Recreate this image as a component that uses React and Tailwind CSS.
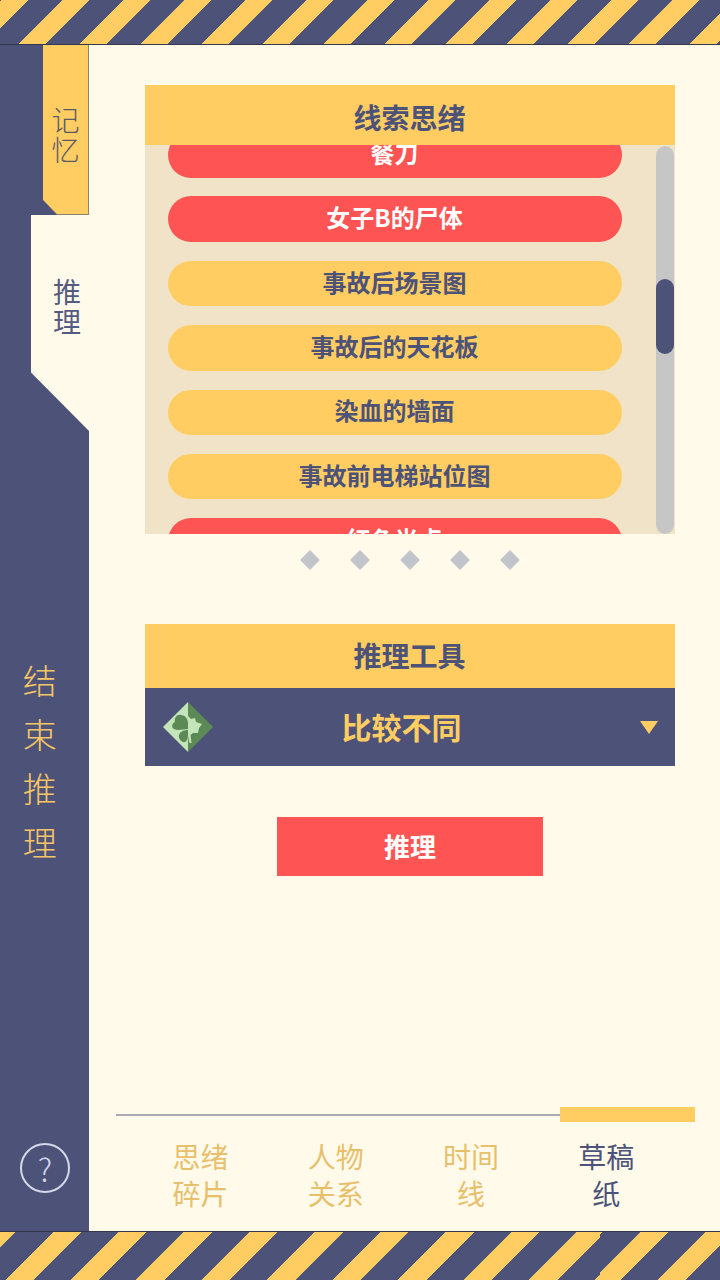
const font = { fontFamily: '"Noto Sans CJK SC", "Noto Sans", sans-serif' };

const pills = [
  ['餐刀', 'red'],
  ['女子B的尸体', 'red'],
  ['事故后场景图', 'yellow'],
  ['事故后的天花板', 'yellow'],
  ['染血的墙面', 'yellow'],
  ['事故前电梯站位图', 'yellow'],
  ['红色光点', 'red'],
];

function Clover() {
  return (
    <svg width="50" height="50" viewBox="0 0 50 50">
      <polygon points="25,0 25,50 0,25" fill="#c4e4ba" />
      <polygon points="25,0 50,25 25,50" fill="#5c8a57" />
      <path d="M25 27 C21 27 15 29 11 27 C8 25 9 21 12 20 C11 16 14 12 18 13 C22 13 25 17 25 21 Z" fill="#5c8a57" />
      <path d="M25 28 C22 28 17 29 16 33 C15 37 19 41 22 40 C24 39 25 36 25 33 Z" fill="#5c8a57" />
      <path d="M25 14 L28 17 L32 16 L33 20 L39 22 L36 26 L35 31 L30 31 L27.5 33 L28.5 41 L26.5 41 L25 34 Z" fill="#c4e4ba" />
    </svg>
  );
}

export default function App() {
  return (
    <div style={font} className="flex h-[1280px] w-[720px] flex-col overflow-hidden bg-[#fffaea]">
      <div className="h-[44px] shrink-0 bg-[repeating-linear-gradient(135deg,#4c5278_0px,#4c5278_1.4px,#ffcd62_1.4px,#ffcd62_20.2px,#4c5278_20.2px,#4c5278_43.13px)]" />
      <div className="h-px shrink-0 bg-[#33364d]" />

      <div className="flex min-h-0 flex-1">
        <aside className="relative z-10 flex w-[88.5px] shrink-0 flex-col bg-[#4c5278]">
          <div className="ml-[43px] h-[170px] w-[46px] shrink-0 bg-[#8a8468] [clip-path:polygon(0_0,100%_0,100%_100%,14px_100%,0_155px)]">
            <div className="flex h-[169px] w-[45px] flex-col items-center bg-[#ffcd62] pt-[59px] [clip-path:polygon(0_0,100%_0,100%_100%,14px_100%,0_155px)]">
              <span className="text-[28px] leading-[30px] font-light text-[#5a5a66]">记</span>
              <span className="text-[28px] leading-[30px] font-light text-[#5a5a66]">忆</span>
            </div>
          </div>
          <div className="ml-[30.5px] flex h-[217px] w-[59.5px] shrink-0 flex-col items-center bg-[#fffaea] pt-[61px] pl-[13.5px] [clip-path:polygon(0_0,100%_0,100%_100%,0_157px)]">
            <span className="text-[28px] leading-[30px] text-[#555b80]">推</span>
            <span className="text-[28px] leading-[30px] text-[#555b80]">理</span>
          </div>
          <div className="mt-[221px] flex flex-col items-center pr-[9px] text-[34px] leading-[54px] font-light text-[#f5c566]">
            <span>结</span>
            <span>束</span>
            <span>推</span>
            <span>理</span>
          </div>
          <div className="mt-auto mb-[38px] ml-[20px] flex h-[50px] w-[50px] items-center justify-center rounded-full border-2 border-[#d5d8ea] text-[32px] leading-none font-light text-[#d5d8ea]">
            ?
          </div>
        </aside>

        <main className="flex min-w-0 flex-1 flex-col">
          <div className="ml-[56px] mt-[40px] w-[530px]">
            <div className="flex h-[60px] items-center justify-center bg-[#ffcd62] pt-[3px] text-[28px] font-bold text-[#4c5278]">线索思绪</div>
            <div className="relative h-[389px] overflow-hidden bg-[#f0e3c7]">
              <div className="-mt-[13px] ml-[23px] flex w-[454px] flex-col gap-[18.9px]">
                {pills.map(([t, c]) => (
                  <div
                    key={t}
                    className={
                      c === 'red'
                        ? 'flex h-[45.5px] shrink-0 items-center justify-center rounded-full bg-[#ff5454] pb-[4px] text-[24px] font-bold text-white'
                        : 'flex h-[45.5px] shrink-0 items-center justify-center rounded-full bg-[#ffcd62] pb-[4px] text-[24px] font-bold text-[#4c5278]'
                    }
                  >
                    {t}
                  </div>
                ))}
              </div>
              <div className="absolute top-px right-px bottom-0 w-[18px] rounded-full bg-[#c6c6c6]">
                <div className="absolute top-[133px] h-[75px] w-[18px] rounded-full bg-[#4c5278]" />
              </div>
            </div>
            <div className="mt-[19px] flex justify-center gap-[36px]">
              {[0, 1, 2, 3, 4].map((i) => (
                <div key={i} className="h-[14px] w-[14px] rotate-45 bg-[#c2c4cb]" />
              ))}
            </div>
          </div>

          <div className="ml-[56px] mt-[57px] w-[530px]">
            <div className="flex h-[64px] items-center justify-center bg-[#ffcd62] pb-[2px] text-[28px] font-bold text-[#4c5278]">推理工具</div>
            <div className="relative flex h-[78px] items-center bg-[#4c5278] pr-[84px] pl-[18px]">
              <Clover />
              <span className="flex-1 pb-[2px] text-center text-[30px] font-bold text-[#ffcd62]">比较不同</span>
              <svg className="absolute top-[33px] right-[17px]" width="18" height="13" viewBox="0 0 18 13"><polygon points="0,0 18,0 9,13" fill="#ffcd62" /></svg>
            </div>
          </div>

          <div className="mt-[51px] ml-[188.5px] flex h-[59px] w-[266px] items-center justify-center bg-[#ff5454] pb-[2px] text-[26px] font-bold text-white">推理</div>

          <div className="mt-auto mb-[19px] ml-[27.5px] w-[579px]">
            <div className="flex h-[15px] items-center">
              <div className="h-[2px] flex-1 bg-[#aaaab4]" />
              <div className="h-[15px] w-[135px] bg-[#ffcd62]" />
            </div>
            <div className="mt-[16px] mr-[21px] ml-[17px] grid grid-cols-4 text-center text-[28px] leading-[37px] text-[#e8c06c]">
              <div className="px-[30px]">思绪碎片</div>
              <div className="px-[30px]">人物关系</div>
              <div className="px-[30px]">时间线</div>
              <div className="px-[30px] text-[#4c5278]">草稿纸</div>
            </div>
          </div>
        </main>
      </div>

      <div className="h-px shrink-0 bg-[#33364d]" />
      <div className="flex h-[48px] shrink-0">
        <div className="w-[600px] bg-[repeating-linear-gradient(135deg,#ffcd62_0px,#ffcd62_11.3px,#4c5278_11.3px,#4c5278_37.5px,#ffcd62_37.5px,#ffcd62_46.3px)]" />
        <div className="flex-1 bg-[repeating-linear-gradient(135deg,#ffcd62_0px,#ffcd62_1.8px,#4c5278_1.8px,#4c5278_28.3px,#ffcd62_28.3px,#ffcd62_46.3px)]" />
      </div>
    </div>
  );
}
